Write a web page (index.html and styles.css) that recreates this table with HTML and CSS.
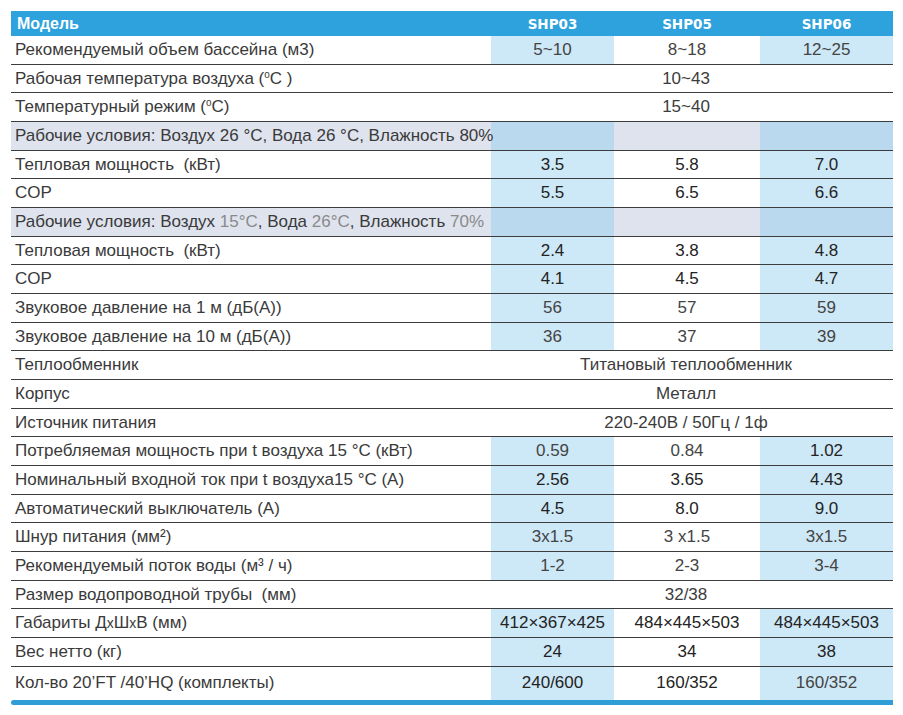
FILE: index.html
```html
<!DOCTYPE html>
<html lang="ru">
<head>
<meta charset="utf-8">
<title>SHP</title>
<link rel="stylesheet" href="styles.css">
</head>
<body>
<div class="sheet">
<table class="spec">
  <colgroup>
    <col class="c-label"><col class="c-a"><col class="c-b"><col class="c-c">
  </colgroup>
  <thead>
    <tr class="head">
      <th class="lbl">Модель</th><th>SHP03</th><th>SHP05</th><th>SHP06</th>
    </tr>
  </thead>
  <tbody>
    <tr><td class="lbl">Рекомендуемый объем бассейна (м3)</td><td class="blue mid">5~10</td><td class="mid">8~18</td><td class="blue mid">12~25</td></tr>
    <tr><td class="lbl">Рабочая температура воздуха (<sup>o</sup>C )</td><td colspan="3" class="span">10~43</td></tr>
    <tr><td class="lbl">Температурный режим (<sup>o</sup>C)</td><td colspan="3" class="span">15~40</td></tr>
    <tr class="section"><td class="lbl">Рабочие условия: Воздух 26 °C, Вода 26 °C, Влажность 80%</td><td class="sblue"></td><td></td><td class="sblue"></td></tr>
    <tr><td class="lbl">Тепловая мощность&nbsp; (кВт)</td><td class="blue dark">3.5</td><td class="dark">5.8</td><td class="blue dark">7.0</td></tr>
    <tr><td class="lbl">COP</td><td class="blue dark">5.5</td><td class="dark">6.5</td><td class="blue dark">6.6</td></tr>
    <tr class="section"><td class="lbl">Рабочие условия: Воздух <span class="light">15°C</span>, Вода <span class="light">26°C</span>, Влажность <span class="light">70%</span></td><td class="sblue"></td><td></td><td class="sblue"></td></tr>
    <tr><td class="lbl">Тепловая мощность&nbsp; (кВт)</td><td class="blue dark">2.4</td><td class="dark">3.8</td><td class="blue dark">4.8</td></tr>
    <tr><td class="lbl">COP</td><td class="blue dark">4.1</td><td class="dark">4.5</td><td class="blue dark">4.7</td></tr>
    <tr><td class="lbl">Звуковое давление на 1 м (дБ(А))</td><td class="blue mid">56</td><td class="mid">57</td><td class="blue mid">59</td></tr>
    <tr><td class="lbl">Звуковое давление на 10 м (дБ(А))</td><td class="blue mid">36</td><td class="mid">37</td><td class="blue mid">39</td></tr>
    <tr><td class="lbl">Теплообменник</td><td colspan="3" class="span">Титановый теплообменник</td></tr>
    <tr><td class="lbl">Корпус</td><td colspan="3" class="span">Металл</td></tr>
    <tr><td class="lbl">Источник питания</td><td colspan="3" class="span">220-240В / 50Гц / 1ф</td></tr>
    <tr><td class="lbl">Потребляемая мощность при t воздуха 15 °C (кВт)</td><td class="blue mid">0.59</td><td class="mid">0.84</td><td class="blue dark">1.02</td></tr>
    <tr><td class="lbl">Номинальный входной ток при t воздуха15 °C (А)</td><td class="blue dark">2.56</td><td class="dark">3.65</td><td class="blue dark">4.43</td></tr>
    <tr><td class="lbl">Автоматический выключатель (А)</td><td class="blue dark">4.5</td><td class="dark">8.0</td><td class="blue dark">9.0</td></tr>
    <tr><td class="lbl">Шнур питания (мм²)</td><td class="blue mid">3x1.5</td><td class="mid">3 x1.5</td><td class="blue mid">3x1.5</td></tr>
    <tr><td class="lbl">Рекомендуемый поток воды (м³ / ч)</td><td class="blue mid">1-2</td><td class="mid">2-3</td><td class="blue mid">3-4</td></tr>
    <tr><td class="lbl">Размер водопроводной трубы&nbsp; (мм)</td><td colspan="3" class="span">32/38</td></tr>
    <tr><td class="lbl">Габариты Д<span class="x">x</span>Ш<span class="x">x</span>В (мм)</td><td class="blue dark">412×367×425</td><td class="dark">484×445×503</td><td class="blue dark">484×445×503</td></tr>
    <tr><td class="lbl">Вес нетто (кг)</td><td class="blue dark">24</td><td class="dark">34</td><td class="blue dark">38</td></tr>
    <tr class="last"><td class="lbl">Кол-во 20’FT /40’HQ (комплекты)</td><td class="blue dark">240/600</td><td class="dark">160/352</td><td class="blue mid">160/352</td></tr>
  </tbody>
</table>
<div class="endbar"></div>
</div>
</body>
</html>
```
FILE: styles.css
```css
html, body {
  margin: 0;
  padding: 0;
  background: #ffffff;
}
.sheet {
  padding: 11px 10px 10px 11px;
  width: 882px;
}
.spec {
  width: 882px;
  border-collapse: collapse;
  table-layout: fixed;
  font-family: "Liberation Sans", Arial, sans-serif;
  font-size: 17px;
  color: #333333;
}
.c-label { width: 480px; }
.c-a { width: 123px; }
.c-b { width: 146px; }
.c-c { width: 133px; }

.head th {
  background: #2ea2dc;
  color: #ffffff;
  height: 25px;
  padding: 0;
  font-family: "DejaVu Sans", sans-serif;
  font-weight: bold;
  font-size: 13.5px;
  text-align: center;
  vertical-align: middle;
}
.head th.lbl {
  text-align: left;
  padding-left: 6px;
  font-family: "Liberation Sans", Arial, sans-serif;
  font-size: 16px;
}

.spec tbody td {
  height: 27.68px;
  padding: 0;
  line-height: 20px;
  border-bottom: 1px solid #3d3d3d;
  text-align: center;
  vertical-align: middle;
  white-space: nowrap;
}
.spec tbody td.lbl {
  text-align: left;
  padding-left: 4px;
  color: #3a3a3a;
  overflow: visible;
}
.spec tbody tr.last td {
  height: 33px;
  border-bottom: none;
}
.blue { background: #cde8f7; }
.mid { color: #444444; }
.dark { color: #232323; }
.span {
  color: #3c3c3c;
  padding-right: 12px !important;
}
.section td { background: #dee3ee; }
.section td.lbl { color: #505050; }
.section td.sblue { background: #bad8ee; }
.light { color: #8a8a8a; }
sup {
  font-size: 10px;
  vertical-align: 6px;
  line-height: 0;
}
.x { font-size: 14px; }

.endbar {
  height: 5px;
  background: #2f9dd6;
  border-radius: 3px 0 0 3px;
}
```
